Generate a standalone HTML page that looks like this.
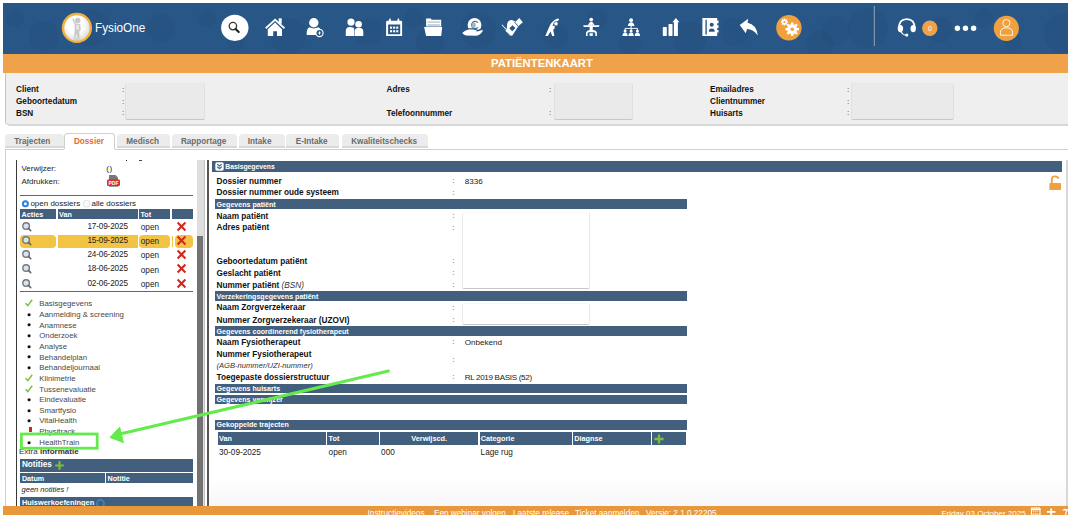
<!DOCTYPE html>
<html><head><meta charset="utf-8">
<style>
*{box-sizing:border-box}
html,body{margin:0;padding:0}
body{width:1070px;height:518px;overflow:hidden;position:relative;background:#fff;font-family:"Liberation Sans",sans-serif;color:#111}
.a{position:absolute;white-space:nowrap}
</style></head><body>
<div class="a" style="left:3px;top:3px;width:1065px;height:50.5px;background:#285787;"></div>
<svg class="a" style="left:0;top:0" width="1070" height="53" viewBox="0 0 1070 53">
<defs>
<radialGradient id="lg" cx="0.45" cy="0.4" r="0.6"><stop offset="0.5" stop-color="#fff"/><stop offset="1" stop-color="#d8d8d8"/></radialGradient>
<clipPath id="hc"><rect x="3" y="3" width="1065" height="50"/></clipPath>
</defs>
<g clip-path="url(#hc)" fill="#000" fill-opacity="0.035">
<circle cx="15" cy="18" r="9"/><circle cx="44" cy="36" r="15"/><circle cx="92" cy="28" r="19"/>
<circle cx="161" cy="28" r="14"/><circle cx="207" cy="18" r="9"/><circle cx="236" cy="42" r="9"/>
<circle cx="288" cy="36" r="18"/><circle cx="368" cy="32" r="14"/><circle cx="414" cy="18" r="10"/>
<circle cx="430" cy="42" r="14"/><circle cx="478" cy="30" r="18"/><circle cx="555" cy="35" r="13"/>
<circle cx="597" cy="19" r="10"/><circle cx="630" cy="44" r="11"/><circle cx="690" cy="38" r="17"/>
<circle cx="735" cy="32" r="14"/><circle cx="820" cy="44" r="14"/><circle cx="836" cy="31" r="15"/>
<circle cx="868" cy="28" r="20"/><circle cx="940" cy="30" r="13"/><circle cx="984" cy="18" r="10"/>
<circle cx="1013" cy="42" r="9"/><circle cx="1063" cy="33" r="20"/>
</g>
<!-- logo -->
<circle cx="76.9" cy="27.9" r="13.9" fill="url(#lg)" stroke="#f0b23c" stroke-width="2.4"/>
<g fill="#c9c9c9">
<circle cx="77.8" cy="20.4" r="2.7"/>
<path d="M74.6 24 Q77.6 22.8 80.3 24.2 L80.8 30.2 L79.3 31.3 L79.6 37.6 L77.6 38.6 L76.7 33.5 L75.8 37.8 L74.1 37.3 L74.7 30.5 Z"/>
<path d="M75 24.4 L73 21.3 L72.4 18.4 L73.8 18.5 L74.7 21.2 L76.3 23.6 Z"/>
</g>
<path d="M76 25 Q77.5 24.2 79 25 L79.3 29.5 L76.3 29.8 Z" fill="#e4e4e4"/>
<ellipse cx="77.2" cy="39" rx="4" ry="0.9" fill="#d0d0d0"/>
<text x="95" y="31.8" font-family="Liberation Sans" font-size="13.2" fill="#fff" transform="translate(95 0) scale(0.89 1) translate(-95 0)">FysioOne</text>
<!-- search -->
<ellipse cx="234.8" cy="27.8" rx="13.7" ry="13.1" fill="#fff"/>
<circle cx="232.9" cy="26.1" r="3.7" fill="none" stroke="#333" stroke-width="1.3"/>
<path d="M235.6 28.9 L238.7 32" stroke="#222" stroke-width="2.1" stroke-linecap="round"/>
<g fill="#fff">
<!-- home -->
<path d="M265.2 27.6 L275.1 18.5 L285 27.6 L283.9 28.9 L275.1 20.9 L266.3 28.9 Z"/>
<rect x="278.7" y="18.3" width="3" height="5.5"/>
<path d="M267.8 29.3 L275.1 22.4 L282 29.3 L282 35.9 L277 35.9 L277 31.2 L273.2 31.2 L273.2 35.9 L267.8 35.9 Z"/>
<!-- user badge -->
<circle cx="313.8" cy="22.8" r="4.7"/>
<path d="M306.7 34.9 Q306.2 29 309.5 27.3 Q313.8 29.5 318.2 27.3 Q320.5 28.5 320.6 30 L320.6 34.9 Z"/>
<circle cx="319.5" cy="33" r="3.6" fill="#285787" stroke="#fff" stroke-width="1.1"/>
<path d="M319.5 30.9 L320.6 33 L319.5 35.1 L318.4 33 Z"/>
<!-- two users -->
<circle cx="351" cy="22.1" r="3.6"/>
<circle cx="358.6" cy="24.2" r="3.3"/>
<path d="M345.8 35.9 L345.8 31 Q345.8 27.1 350 27.1 Q353.6 27.1 354.2 29 L354.2 35.9 Z"/>
<path d="M354.6 35.9 L354.6 31.5 Q354.6 27.8 358.9 27.8 Q363.3 27.8 363.3 31.5 L363.3 35.9 Z"/>
<!-- calendar -->
<path d="M386.1 22 Q386.1 20.7 387.4 20.7 L388.8 20.7 L389.4 18.4 L390.6 18.4 L391 20.7 L397.4 20.7 L397.8 18.4 L399 18.4 L399.4 20.7 L400.8 20.7 Q402.1 20.7 402.1 22 L402.1 35.9 L386.1 35.9 Z M388.1 24.4 L388.1 34.2 L400.2 34.2 L400.2 24.4 Z"/>
<rect x="390" y="26.6" width="2.1" height="2.1"/><rect x="393.1" y="26.6" width="2.1" height="2.1"/><rect x="396.2" y="26.6" width="2.1" height="2.1"/>
<rect x="390" y="30.2" width="2.1" height="2.1"/><rect x="393.1" y="30.2" width="2.1" height="2.1"/><rect x="396.2" y="30.2" width="2.1" height="2.1"/>
<!-- folder -->
<path d="M426.1 26.5 L426.1 18.4 L430.9 18.4 L431.5 19.7 L441.2 19.7 L441.2 26.5 Z"/>
<path d="M427.3 21.2 L440 21.2 L440 23 L427.3 23 Z M427.5 24 L439.8 24 L439.8 26 L427.5 26 Z" fill="#c8d4e0"/>
<path d="M424.1 27.1 L442.2 27.1 L441.2 35.9 L426.1 35.9 Z"/>
<!-- hand coin -->
<circle cx="474.5" cy="25" r="6.9"/>
<path d="M477.9 22.6 A3.6 3.6 0 1 0 477.9 27.4" fill="none" stroke="#3d6a99" stroke-width="1.1"/>
<rect x="471.8" y="23" width="3.8" height="4.6" fill="#9fb5cb"/>
<path d="M462 32.6 Q465 29.6 468.6 28.8 L474 29 L477.9 30.5 L483 29.1" fill="none" stroke="#285787" stroke-width="1.3"/>
<path d="M462.2 33 Q465 30.2 468.6 29.6 L474 29.8 Q476.5 30.3 475.8 31.2 L471 31.6 L477.6 31.6 L482.8 29.8 Q483.2 31.5 480.8 33.4 Q479 35.3 476.5 35.7 L466 35.6 Q463.5 34.9 462.2 33 Z"/>
<!-- syringe hand -->
<path fill-rule="evenodd" d="M507 27.6 Q506.6 21.6 510 20.3 Q512.6 19.4 515.2 21.8 L518.8 25.6 L512.2 35.7 L509.6 35.4 L505.4 30.8 L506.4 29.6 Z M509.3 28.3 L512.5 25.2 L515.4 28.1 L512.2 31.3 Z"/>
<path d="M514.6 22.2 L518.2 26.4" stroke="#285787" stroke-width="0.9"/>
<path d="M515.4 21.8 L519.3 18 L522.8 22.2 L518.6 26 Z"/>
<path d="M501.6 25.1 L502.3 24.5 L506.6 29.2 L505.9 29.8 Z"/>
<path d="M507 32.5 L510.5 35.6" stroke="#285787" stroke-width="0.6"/>
<!-- stretch person -->
<path d="M545.3 35.9 L548.6 28.3 Q550.5 22 556.3 18.9 Q558.6 18 559 19.3 Q559 20.6 557.2 21.2 Q553.2 23.6 552.6 26 L554.8 25.8 L554.6 28.6 L553.2 29.8 L554.4 35.9 L552.2 35.9 L550.6 31.6 L547.8 35.9 Z"/>
<circle cx="556" cy="23.8" r="2.2" fill="#fff" stroke="#285787" stroke-width="0.8"/>
<!-- desk person -->
<circle cx="591.2" cy="19.6" r="1.9"/>
<path d="M587.6 25.6 L590 21.9 L592.4 21.9 L594.8 25.6 L593.2 25.6 L591.2 23.4 L589.2 25.6 Z"/>
<path d="M590.2 22.8 L592.2 22.8 L592.2 25.6 L590.2 25.6 Z"/>
<path d="M583.1 25.2 L599.6 25.2 L598.8 26.9 L583.9 26.9 Z"/>
<path d="M589.6 26.9 L592.8 26.9 L592.8 30 Q596.2 30 596.9 32.5 L596.9 35.9 L595.3 35.9 L595.3 33 Q595 32.2 593.5 32.2 L589 32.2 Q587.6 32.2 587.6 33 L587.6 35.9 L586 35.9 L586 32.5 Q586.8 30 589.6 30 Z"/>
<rect x="589.6" y="33.2" width="3.2" height="2.7"/>
<!-- hierarchy -->
<circle cx="631.1" cy="20.2" r="1.9"/>
<path d="M627.8 25.9 Q628.5 22.3 631.1 22.3 Q633.7 22.3 634.5 25.9 Z"/>
<rect x="630.6" y="25.5" width="1" height="2.8"/>
<rect x="625" y="27.9" width="12.4" height="0.9"/>
<rect x="624.6" y="28.4" width="1" height="1.5"/><rect x="630.6" y="28.4" width="1" height="1.5"/><rect x="636.9" y="28.4" width="1" height="1.5"/>
<circle cx="625.1" cy="31" r="1.5"/><circle cx="631.1" cy="31" r="1.5"/><circle cx="637.4" cy="31" r="1.5"/>
<path d="M622.4 35.9 Q622.8 32.6 625.1 32.6 Q627.4 32.6 627.8 35.9 Z M628.4 35.9 Q628.8 32.6 631.1 32.6 Q633.4 32.6 633.8 35.9 Z M634.7 35.9 Q635.1 32.6 637.4 32.6 Q639.7 32.6 640.1 35.9 Z"/>
<!-- bars -->
<rect x="662.8" y="27.1" width="4" height="8.8" rx="0.6"/>
<rect x="668.5" y="24.1" width="4" height="11.8" rx="0.6"/>
<path d="M673.9 35.9 L673.9 22.3 L672.4 22.3 L675.9 18.1 L679.4 22.3 L677.9 22.3 L677.9 35.9 Z"/>
<!-- contact book -->
<path d="M702.4 18.1 L717.2 18.1 L717.2 20.5 L718.5 20.5 L718.5 23.2 L717.2 23.2 L717.2 25.2 L718.5 25.2 L718.5 27.9 L717.2 27.9 L717.2 29.9 L718.5 29.9 L718.5 32.6 L717.2 32.6 L717.2 35.9 L702.4 35.9 Z M705.4 19.7 L705.4 34.5 L706.8 34.5 L706.8 19.7 Z"/>
<circle cx="711.7" cy="24.7" r="2" fill="#285787"/>
<path d="M708.9 31.8 L708.9 30.6 Q709.2 28.4 711.7 28.4 Q714.3 28.4 714.6 30.6 L714.6 31.8 Z" fill="#285787"/>
<!-- reply -->
<path d="M739.7 25.1 L748.2 18.7 L747.6 22.8 Q756.5 24.5 757.8 35.6 Q753.5 29.5 747 29.1 L745.8 33.2 Z"/>
</g>
<!-- gears -->
<circle cx="788.9" cy="27.7" r="12.7" fill="#f0a03c"/>
<g fill="#fff">
<g transform="translate(792.2 29.2)">
<circle r="5"/>
<rect x="-1.2" y="-6.8" width="2.4" height="13.6"/><rect x="-1.2" y="-6.8" width="2.4" height="13.6" transform="rotate(45)"/><rect x="-1.2" y="-6.8" width="2.4" height="13.6" transform="rotate(90)"/><rect x="-1.2" y="-6.8" width="2.4" height="13.6" transform="rotate(135)"/>
<circle r="1.8" fill="#f0a03c"/>
</g>
<g transform="translate(784.4 22)">
<circle r="2.6"/>
<rect x="-0.7" y="-3.5" width="1.4" height="7"/><rect x="-0.7" y="-3.5" width="1.4" height="7" transform="rotate(45)"/><rect x="-0.7" y="-3.5" width="1.4" height="7" transform="rotate(90)"/><rect x="-0.7" y="-3.5" width="1.4" height="7" transform="rotate(135)"/>
<circle r="1.1" fill="#f0a03c"/>
</g>
</g>
<!-- separator -->
<rect x="873.8" y="6" width="1" height="40" fill="#8fa5bb"/>
<!-- headset -->
<path d="M898.9 28.5 Q898.9 19.2 906.8 19.2 Q914.7 19.2 914.7 28.5" fill="none" stroke="#fff" stroke-width="1.8"/>
<ellipse cx="900.4" cy="28.6" rx="2.7" ry="3.7" fill="#fff"/>
<ellipse cx="913.2" cy="28.6" rx="2.7" ry="3.7" fill="#fff"/>
<path d="M900.8 31.5 Q902.5 34.8 906 35.2" fill="none" stroke="#fff" stroke-width="1.1"/>
<circle cx="906.8" cy="35.1" r="1.6" fill="#fff"/>
<!-- badge -->
<circle cx="929.8" cy="28.2" r="7.7" fill="#f0a24a"/>
<text x="929.8" y="31.3" font-family="Liberation Sans" font-size="8" fill="#fff" text-anchor="middle" transform="translate(929.8 0) scale(0.85 1) translate(-929.8 0)">0</text>
<!-- dots -->
<circle cx="957.4" cy="28.2" r="2.7" fill="#fff"/><circle cx="965.5" cy="28.2" r="2.7" fill="#fff"/><circle cx="973.6" cy="28.2" r="2.7" fill="#fff"/>
<!-- user -->
<circle cx="1006.4" cy="28.3" r="12.6" fill="#f0a03c"/>
<circle cx="1006.4" cy="23.1" r="3.6" fill="none" stroke="#fff" stroke-width="0.9"/>
<path d="M1000.5 35.2 L1000.5 32.5 Q1000.5 27.8 1006.4 27.8 Q1012.5 27.8 1012.5 32.5 L1012.5 35.2 Z" fill="none" stroke="#fff" stroke-width="0.9"/>
</svg>
<div class="a" style="left:3px;top:53.5px;width:1065px;height:19.3px;background:#f0a24a;"></div>
<div class="a" style="left:491px;top:57.83px;font-size:11.3px;line-height:11.3px;font-weight:bold;color:#fff;font-style:normal;">PATIËNTENKAART</div>
<div class="a" style="left:5px;top:73px;width:1063px;height:53px;background:#efefef;border-left:1px solid #c4c4c4;border-bottom:2px solid #d8d8d8;border-bottom-left-radius:5px"></div>
<div class="a" style="left:16px;top:86.46px;font-size:8.2px;line-height:8.2px;font-weight:bold;color:#111;font-style:normal;">Client</div>
<div class="a" style="left:122px;top:85.63px;font-size:8px;line-height:8px;font-weight:normal;color:#333;font-style:normal;">:</div>
<div class="a" style="left:16px;top:98.36px;font-size:8.2px;line-height:8.2px;font-weight:bold;color:#111;font-style:normal;">Geboortedatum</div>
<div class="a" style="left:122px;top:97.53px;font-size:8px;line-height:8px;font-weight:normal;color:#333;font-style:normal;">:</div>
<div class="a" style="left:16px;top:110.26px;font-size:8.2px;line-height:8.2px;font-weight:bold;color:#111;font-style:normal;">BSN</div>
<div class="a" style="left:122px;top:109.43px;font-size:8px;line-height:8px;font-weight:normal;color:#333;font-style:normal;">:</div>
<div class="a" style="left:125px;top:83px;width:80px;height:37px;background:#eaeaea;border:1px dotted #d6d6d6;border-top-color:#e8e8e8;border-bottom:1px solid #c8c8c8;border-radius:2px"></div>
<div class="a" style="left:386.5px;top:86.46px;font-size:8.2px;line-height:8.2px;font-weight:bold;color:#111;font-style:normal;">Adres</div>
<div class="a" style="left:386.5px;top:110.26px;font-size:8.2px;line-height:8.2px;font-weight:bold;color:#111;font-style:normal;">Telefoonnummer</div>
<div class="a" style="left:549px;top:85.63px;font-size:8px;line-height:8px;font-weight:normal;color:#333;font-style:normal;">:</div>
<div class="a" style="left:549px;top:109.43px;font-size:8px;line-height:8px;font-weight:normal;color:#333;font-style:normal;">:</div>
<div class="a" style="left:554px;top:83px;width:79px;height:37px;background:#eaeaea;border:1px dotted #d6d6d6;border-top-color:#e8e8e8;border-bottom:1px solid #c8c8c8;border-radius:2px"></div>
<div class="a" style="left:710px;top:86.46px;font-size:8.2px;line-height:8.2px;font-weight:bold;color:#111;font-style:normal;">Emailadres</div>
<div class="a" style="left:847px;top:85.63px;font-size:8px;line-height:8px;font-weight:normal;color:#333;font-style:normal;">:</div>
<div class="a" style="left:710px;top:98.36px;font-size:8.2px;line-height:8.2px;font-weight:bold;color:#111;font-style:normal;">Clientnummer</div>
<div class="a" style="left:847px;top:97.53px;font-size:8px;line-height:8px;font-weight:normal;color:#333;font-style:normal;">:</div>
<div class="a" style="left:710px;top:110.26px;font-size:8.2px;line-height:8.2px;font-weight:bold;color:#111;font-style:normal;">Huisarts</div>
<div class="a" style="left:847px;top:109.43px;font-size:8px;line-height:8px;font-weight:normal;color:#333;font-style:normal;">:</div>
<div class="a" style="left:850.5px;top:83px;width:103px;height:37px;background:#eaeaea;border:1px dotted #d6d6d6;border-top-color:#e8e8e8;border-bottom:1px solid #c8c8c8;border-radius:2px"></div>
<div class="a" style="left:5px;top:133.5px;width:58.8px;height:14px;background:#ececec;border-radius:4px 4px 0 0;border-bottom:2px solid #d9d9d9"></div>
<div class="a" style="left:14.3px;top:137.66px;font-size:8.2px;line-height:8.2px;font-weight:bold;color:#6b6b6b;font-style:normal;">Trajecten</div>
<div class="a" style="left:64.4px;top:133px;width:51.0px;height:17px;background:#fff;border:1px solid #cfcfcf;border-bottom:none;border-radius:4px 4px 0 0"></div>
<div class="a" style="left:73.9px;top:137.66px;font-size:8.2px;line-height:8.2px;font-weight:bold;color:#e8692f;font-style:normal;">Dossier</div>
<div class="a" style="left:117px;top:133.5px;width:53.0px;height:14px;background:#ececec;border-radius:4px 4px 0 0;border-bottom:2px solid #d9d9d9"></div>
<div class="a" style="left:126.3px;top:137.66px;font-size:8.2px;line-height:8.2px;font-weight:bold;color:#6b6b6b;font-style:normal;">Medisch</div>
<div class="a" style="left:171.6px;top:133.5px;width:65.4px;height:14px;background:#ececec;border-radius:4px 4px 0 0;border-bottom:2px solid #d9d9d9"></div>
<div class="a" style="left:180.9px;top:137.66px;font-size:8.2px;line-height:8.2px;font-weight:bold;color:#6b6b6b;font-style:normal;">Rapportage</div>
<div class="a" style="left:238.5px;top:133.5px;width:46.5px;height:14px;background:#ececec;border-radius:4px 4px 0 0;border-bottom:2px solid #d9d9d9"></div>
<div class="a" style="left:247.8px;top:137.66px;font-size:8.2px;line-height:8.2px;font-weight:bold;color:#6b6b6b;font-style:normal;">Intake</div>
<div class="a" style="left:286.4px;top:133.5px;width:53.0px;height:14px;background:#ececec;border-radius:4px 4px 0 0;border-bottom:2px solid #d9d9d9"></div>
<div class="a" style="left:295.7px;top:137.66px;font-size:8.2px;line-height:8.2px;font-weight:bold;color:#6b6b6b;font-style:normal;">E-Intake</div>
<div class="a" style="left:341.9px;top:133.5px;width:85.8px;height:14px;background:#ececec;border-radius:4px 4px 0 0;border-bottom:2px solid #d9d9d9"></div>
<div class="a" style="left:351.2px;top:137.66px;font-size:8.2px;line-height:8.2px;font-weight:bold;color:#6b6b6b;font-style:normal;">Kwaliteitschecks</div>
<div class="a" style="left:5px;top:149px;width:1063px;height:1px;background:#cfcfcf;"></div>
<div class="a" style="left:64.4px;top:149px;width:51px;height:1px;background:#fff;"></div>
<div class="a" style="left:5px;top:149px;width:1px;height:358px;background:#cfcfcf;"></div>
<div class="a" style="left:1066px;top:160px;width:1.5px;height:347px;background:#d8d8d8;"></div>
<div class="a" style="left:16px;top:160px;width:1.3px;height:347px;background:#3a3a3a;"></div>
<div class="a" style="left:196.8px;top:160px;width:7.3px;height:347px;background:#dedede;"></div>
<div class="a" style="left:196.8px;top:236.2px;width:6.2px;height:271px;background:#727272;"></div>
<div class="a" style="left:204px;top:160px;width:1px;height:347px;background:#c4c4c4;"></div>
<div class="a" style="left:206.9px;top:160px;width:1.7px;height:347px;background:#555;"></div>
<div class="a" style="left:21.4px;top:165.03px;font-size:8px;line-height:8px;font-weight:normal;color:#222;font-style:normal;">Verwijzer:</div>
<div class="a" style="left:106.2px;top:165.03px;font-size:8px;line-height:8px;font-weight:normal;color:#222;font-style:normal;letter-spacing:0.6px">()</div>
<div class="a" style="left:21.4px;top:177.63px;font-size:8px;line-height:8px;font-weight:normal;color:#222;font-style:normal;">Afdrukken:</div>
<div class="a" style="left:126px;top:160px;width:1.2px;height:1.2px;background:#222;"></div>
<div class="a" style="left:138.5px;top:160px;width:3px;height:1px;background:#444;"></div>
<svg class="a" style="left:106px;top:174px" width="15" height="14" viewBox="0 0 15 14">
<path d="M3 1 L9.5 1 L12 3.5 L12 7 L3 7 Z" fill="#777"/>
<rect x="1" y="5.5" width="13" height="6.5" rx="1.2" fill="#d3312a"/>
<rect x="3" y="12" width="9" height="1" fill="#999"/>
<text x="7.5" y="10.6" font-family="Liberation Sans" font-size="5" font-weight="bold" fill="#fff" text-anchor="middle">PDF</text>
</svg>
<div class="a" style="left:20px;top:195px;width:173px;height:1.2px;background:#4b6d8c;"></div>
<svg class="a" style="left:20px;top:199.3px" width="75" height="10" viewBox="0 0 75 10">
<circle cx="5.4" cy="4.7" r="3.5" fill="#2f7fe2"/><circle cx="5.4" cy="4.7" r="1.5" fill="#fff"/>
<circle cx="66.6" cy="4.7" r="3.4" fill="#fafafa" stroke="#d8d8d8" stroke-width="0.7"/>
</svg>
<div class="a" style="left:30.4px;top:199.63px;font-size:8px;line-height:8px;font-weight:normal;color:#222;font-style:normal;">open dossiers</div>
<div class="a" style="left:91.6px;top:199.63px;font-size:8px;line-height:8px;font-weight:normal;color:#222;font-style:normal;">alle dossiers</div>
<div class="a" style="left:20.2px;top:209px;width:36.0px;height:9.8px;background:#42607d;"></div>
<div class="a" style="left:21.599999999999998px;top:210.71px;font-size:7.2px;line-height:7.2px;font-weight:bold;color:#fff;font-style:normal;">Acties</div>
<div class="a" style="left:57.7px;top:209px;width:79.9px;height:9.8px;background:#42607d;"></div>
<div class="a" style="left:59.1px;top:210.71px;font-size:7.2px;line-height:7.2px;font-weight:bold;color:#fff;font-style:normal;">Van</div>
<div class="a" style="left:139px;top:209px;width:30.9px;height:9.8px;background:#42607d;"></div>
<div class="a" style="left:140.4px;top:210.71px;font-size:7.2px;line-height:7.2px;font-weight:bold;color:#fff;font-style:normal;">Tot</div>
<div class="a" style="left:171.6px;top:209px;width:21.4px;height:9.8px;background:#42607d;"></div>
<svg class="a" style="left:20px;top:219.50px" width="14" height="14" viewBox="0 0 14 14">
<circle cx="6.1" cy="6" r="3.3" fill="#d4e4f4" stroke="#787878" stroke-width="1.4"/>
<path d="M8.4 8.4 L10.7 10.6" stroke="#666" stroke-width="1.6" stroke-linecap="round"/></svg>
<div class="a" style="left:58px;width:69.8px;top:222.56px;font-size:8.2px;line-height:8.2px;color:#222;text-align:right;letter-spacing:-0.15px">17-09-2025</div>
<div class="a" style="left:140.8px;top:223.76px;font-size:8.2px;line-height:8.2px;font-weight:normal;color:#222;font-style:normal;">open</div>
<svg class="a" style="left:176px;top:220.50px" width="11" height="11" viewBox="0 0 11 11">
<path d="M1.6 1.6 L9.4 9.4 M9.4 1.6 L1.6 9.4" stroke="#cf2a1e" stroke-width="2.1"/></svg>
<div class="a" style="left:20.2px;top:234.5px;width:36px;height:13px;background:#f3c443;border-radius:4px"></div>
<div class="a" style="left:58px;top:234.5px;width:79.9px;height:13px;background:#f3c443;"></div>
<div class="a" style="left:139px;top:234.5px;width:30.8px;height:13px;background:#f3c443;border-radius:4px"></div>
<div class="a" style="left:171.7px;top:235.5px;width:1.4px;height:11px;background:#f3c443;"></div>
<div class="a" style="left:174.8px;top:234.5px;width:18.3px;height:13px;background:#f3c443;border-radius:4px"></div>
<svg class="a" style="left:20px;top:233.80px" width="14" height="14" viewBox="0 0 14 14">
<circle cx="6.1" cy="6" r="3.3" fill="#d4e4f4" stroke="#787878" stroke-width="1.4"/>
<path d="M8.4 8.4 L10.7 10.6" stroke="#666" stroke-width="1.6" stroke-linecap="round"/></svg>
<div class="a" style="left:58px;width:69.8px;top:236.86px;font-size:8.2px;line-height:8.2px;color:#222;text-align:right;letter-spacing:-0.15px">15-09-2025</div>
<div class="a" style="left:140.8px;top:238.06px;font-size:8.2px;line-height:8.2px;font-weight:normal;color:#222;font-style:normal;">open</div>
<svg class="a" style="left:176px;top:234.80px" width="11" height="11" viewBox="0 0 11 11">
<path d="M1.6 1.6 L9.4 9.4 M9.4 1.6 L1.6 9.4" stroke="#cf2a1e" stroke-width="2.1"/></svg>
<svg class="a" style="left:20px;top:248.10px" width="14" height="14" viewBox="0 0 14 14">
<circle cx="6.1" cy="6" r="3.3" fill="#d4e4f4" stroke="#787878" stroke-width="1.4"/>
<path d="M8.4 8.4 L10.7 10.6" stroke="#666" stroke-width="1.6" stroke-linecap="round"/></svg>
<div class="a" style="left:58px;width:69.8px;top:251.16px;font-size:8.2px;line-height:8.2px;color:#222;text-align:right;letter-spacing:-0.15px">24-06-2025</div>
<div class="a" style="left:140.8px;top:252.36px;font-size:8.2px;line-height:8.2px;font-weight:normal;color:#222;font-style:normal;">open</div>
<svg class="a" style="left:176px;top:249.10px" width="11" height="11" viewBox="0 0 11 11">
<path d="M1.6 1.6 L9.4 9.4 M9.4 1.6 L1.6 9.4" stroke="#cf2a1e" stroke-width="2.1"/></svg>
<svg class="a" style="left:20px;top:262.40px" width="14" height="14" viewBox="0 0 14 14">
<circle cx="6.1" cy="6" r="3.3" fill="#d4e4f4" stroke="#787878" stroke-width="1.4"/>
<path d="M8.4 8.4 L10.7 10.6" stroke="#666" stroke-width="1.6" stroke-linecap="round"/></svg>
<div class="a" style="left:58px;width:69.8px;top:265.46px;font-size:8.2px;line-height:8.2px;color:#222;text-align:right;letter-spacing:-0.15px">18-06-2025</div>
<div class="a" style="left:140.8px;top:266.66px;font-size:8.2px;line-height:8.2px;font-weight:normal;color:#222;font-style:normal;">open</div>
<svg class="a" style="left:176px;top:263.40px" width="11" height="11" viewBox="0 0 11 11">
<path d="M1.6 1.6 L9.4 9.4 M9.4 1.6 L1.6 9.4" stroke="#cf2a1e" stroke-width="2.1"/></svg>
<svg class="a" style="left:20px;top:276.70px" width="14" height="14" viewBox="0 0 14 14">
<circle cx="6.1" cy="6" r="3.3" fill="#d4e4f4" stroke="#787878" stroke-width="1.4"/>
<path d="M8.4 8.4 L10.7 10.6" stroke="#666" stroke-width="1.6" stroke-linecap="round"/></svg>
<div class="a" style="left:58px;width:69.8px;top:279.76px;font-size:8.2px;line-height:8.2px;color:#222;text-align:right;letter-spacing:-0.15px">02-06-2025</div>
<div class="a" style="left:140.8px;top:280.96px;font-size:8.2px;line-height:8.2px;font-weight:normal;color:#222;font-style:normal;">open</div>
<svg class="a" style="left:176px;top:277.70px" width="11" height="11" viewBox="0 0 11 11">
<path d="M1.6 1.6 L9.4 9.4 M9.4 1.6 L1.6 9.4" stroke="#cf2a1e" stroke-width="2.1"/></svg>
<div class="a" style="left:20px;top:291px;width:173px;height:1.2px;background:#4b6d8c;"></div>
<div class="a" style="left:39.3px;top:300.30px;font-size:7.8px;line-height:7.8px;font-weight:normal;color:#484848;font-style:normal;">Basisgegevens</div>
<svg class="a" style="left:25px;top:299.40px" width="8" height="8" viewBox="0 0 8 8">
<path d="M0.6 4.2 L2.8 6.6 L7.2 0.8" fill="none" stroke="#79bf45" stroke-width="1.5"/></svg>
<div class="a" style="left:39.3px;top:310.95px;font-size:7.8px;line-height:7.8px;font-weight:normal;color:#484848;font-style:normal;">Aanmelding &amp; screening</div>
<svg class="a" style="left:26px;top:311.75px" width="6" height="6" viewBox="0 0 6 6"><circle cx="3.1" cy="2.7" r="1.55" fill="#111"/></svg>
<div class="a" style="left:39.3px;top:321.60px;font-size:7.8px;line-height:7.8px;font-weight:normal;color:#484848;font-style:normal;">Anamnese</div>
<svg class="a" style="left:26px;top:322.40px" width="6" height="6" viewBox="0 0 6 6"><circle cx="3.1" cy="2.7" r="1.55" fill="#111"/></svg>
<div class="a" style="left:39.3px;top:332.25px;font-size:7.8px;line-height:7.8px;font-weight:normal;color:#484848;font-style:normal;">Onderzoek</div>
<svg class="a" style="left:26px;top:333.05px" width="6" height="6" viewBox="0 0 6 6"><circle cx="3.1" cy="2.7" r="1.55" fill="#111"/></svg>
<div class="a" style="left:39.3px;top:342.90px;font-size:7.8px;line-height:7.8px;font-weight:normal;color:#484848;font-style:normal;">Analyse</div>
<svg class="a" style="left:26px;top:343.70px" width="6" height="6" viewBox="0 0 6 6"><circle cx="3.1" cy="2.7" r="1.55" fill="#111"/></svg>
<div class="a" style="left:39.3px;top:353.55px;font-size:7.8px;line-height:7.8px;font-weight:normal;color:#484848;font-style:normal;">Behandelplan</div>
<svg class="a" style="left:26px;top:354.35px" width="6" height="6" viewBox="0 0 6 6"><circle cx="3.1" cy="2.7" r="1.55" fill="#111"/></svg>
<div class="a" style="left:39.3px;top:364.20px;font-size:7.8px;line-height:7.8px;font-weight:normal;color:#484848;font-style:normal;">Behandeljournaal</div>
<svg class="a" style="left:26px;top:365.00px" width="6" height="6" viewBox="0 0 6 6"><circle cx="3.1" cy="2.7" r="1.55" fill="#111"/></svg>
<div class="a" style="left:39.3px;top:374.85px;font-size:7.8px;line-height:7.8px;font-weight:normal;color:#484848;font-style:normal;">Klinimetrie</div>
<svg class="a" style="left:25px;top:373.95px" width="8" height="8" viewBox="0 0 8 8">
<path d="M0.6 4.2 L2.8 6.6 L7.2 0.8" fill="none" stroke="#79bf45" stroke-width="1.5"/></svg>
<div class="a" style="left:39.3px;top:385.50px;font-size:7.8px;line-height:7.8px;font-weight:normal;color:#484848;font-style:normal;">Tussenevaluatie</div>
<svg class="a" style="left:25px;top:384.60px" width="8" height="8" viewBox="0 0 8 8">
<path d="M0.6 4.2 L2.8 6.6 L7.2 0.8" fill="none" stroke="#79bf45" stroke-width="1.5"/></svg>
<div class="a" style="left:39.3px;top:396.15px;font-size:7.8px;line-height:7.8px;font-weight:normal;color:#484848;font-style:normal;">Eindevaluatie</div>
<svg class="a" style="left:26px;top:396.95px" width="6" height="6" viewBox="0 0 6 6"><circle cx="3.1" cy="2.7" r="1.55" fill="#111"/></svg>
<div class="a" style="left:39.3px;top:406.80px;font-size:7.8px;line-height:7.8px;font-weight:normal;color:#484848;font-style:normal;">Smartfysio</div>
<svg class="a" style="left:26px;top:407.60px" width="6" height="6" viewBox="0 0 6 6"><circle cx="3.1" cy="2.7" r="1.55" fill="#111"/></svg>
<div class="a" style="left:39.3px;top:417.45px;font-size:7.8px;line-height:7.8px;font-weight:normal;color:#484848;font-style:normal;">VitalHealth</div>
<svg class="a" style="left:26px;top:418.25px" width="6" height="6" viewBox="0 0 6 6"><circle cx="3.1" cy="2.7" r="1.55" fill="#111"/></svg>
<div class="a" style="left:39.3px;top:428.10px;font-size:7.8px;line-height:7.8px;font-weight:normal;color:#484848;font-style:normal;">Physitrack</div>
<div class="a" style="left:29.4px;top:426.59999999999997px;width:2.4px;height:5.8px;background:#d0281e;"></div>
<div class="a" style="left:39.3px;top:438.75px;font-size:7.8px;line-height:7.8px;font-weight:normal;color:#484848;font-style:normal;">HealthTrain</div>
<svg class="a" style="left:26px;top:439.55px" width="6" height="6" viewBox="0 0 6 6"><circle cx="3.1" cy="2.7" r="1.55" fill="#111"/></svg>
<div class="a" style="left:19px;top:448.43px;font-size:8px;line-height:8px;font-weight:normal;color:#333;font-style:normal;">Extra <b>informatie</b></div>
<div class="a" style="left:20.1px;top:459px;width:173px;height:12.5px;background:#42607d;"></div>
<div class="a" style="left:21.9px;top:461.26px;font-size:8.2px;line-height:8.2px;font-weight:bold;color:#fff;font-style:normal;">Notities</div>
<svg class="a" style="left:55px;top:460.5px" width="9" height="9" viewBox="0 0 9 9">
<path d="M4.5 0.3 L4.5 8.7 M0.2 4.5 L8.8 4.5" stroke="#7bbd42" stroke-width="2.2"/></svg>
<div class="a" style="left:20.1px;top:473.3px;width:84.6px;height:9.5px;background:#42607d;"></div>
<div class="a" style="left:106.1px;top:473.3px;width:86.9px;height:9.5px;background:#42607d;"></div>
<div class="a" style="left:21.9px;top:474.61px;font-size:7.2px;line-height:7.2px;font-weight:bold;color:#fff;font-style:normal;">Datum</div>
<div class="a" style="left:107.5px;top:474.61px;font-size:7.2px;line-height:7.2px;font-weight:bold;color:#fff;font-style:normal;">Notitie</div>
<div class="a" style="left:21.6px;top:486.05px;font-size:7.5px;line-height:7.5px;font-weight:normal;color:#222;font-style:italic;">geen notities !</div>
<div class="a" style="left:20.1px;top:497.3px;width:173px;height:10px;background:#42607d;"></div>
<div class="a" style="left:21.9px;top:498.64px;font-size:7.4px;line-height:7.4px;font-weight:bold;color:#fff;font-style:normal;">Huiswerkoefeningen</div>
<svg class="a" style="left:95px;top:498px" width="11" height="9" viewBox="0 0 11 9">
<circle cx="5.5" cy="5.5" r="3.6" fill="none" stroke="#3a86c8" stroke-width="1.6"/></svg>
<div class="a" style="left:212.2px;top:161px;width:849.8px;height:10.8px;background:#42607d;"></div>
<svg class="a" style="left:214.5px;top:162.4px" width="9" height="9" viewBox="0 0 9 9">
<rect x="0.3" y="0.3" width="8.4" height="8.4" rx="1.6" fill="#fff"/>
<path d="M2.3 2.2 L4.5 4 L6.7 2.2 M2.3 4.8 L4.5 6.6 L6.7 4.8" fill="none" stroke="#3b6fa6" stroke-width="1.3"/></svg>
<div class="a" style="left:225.3px;top:163.84px;font-size:6.8px;line-height:6.8px;font-weight:bold;color:#fff;font-style:normal;">Basisgegevens</div>
<svg class="a" style="left:1049px;top:174.5px" width="13" height="16" viewBox="0 0 13 16">
<path d="M2.8 8 L2.8 4.6 Q2.8 1.3 6 1.3 Q8.8 1.3 9.6 3.6" fill="none" stroke="#f0a03c" stroke-width="1.8"/>
<rect x="0.4" y="7.9" width="11.6" height="7.2" rx="0.8" fill="#f0a03c"/></svg>
<div class="a" style="left:216.5px;top:177.72px;font-size:8.25px;line-height:8.25px;font-weight:bold;color:#111;font-style:normal;">Dossier nummer</div>
<div class="a" style="left:452.2px;top:176.93px;font-size:8px;line-height:8px;font-weight:normal;color:#444;font-style:normal;">:</div>
<div class="a" style="left:464.7px;top:177.84px;font-size:8.1px;line-height:8.1px;font-weight:normal;color:#222;font-style:normal;">8336</div>
<div class="a" style="left:216.5px;top:189.32px;font-size:8.25px;line-height:8.25px;font-weight:bold;color:#111;font-style:normal;">Dossier nummer oude systeem</div>
<div class="a" style="left:452.2px;top:188.53px;font-size:8px;line-height:8px;font-weight:normal;color:#444;font-style:normal;">:</div>
<div class="a" style="left:214.9px;top:199.3px;width:472.3px;height:9.5px;background:#42607d;"></div>
<div class="a" style="left:216.6px;top:201.59px;font-size:7.1px;line-height:7.1px;font-weight:bold;color:#fff;font-style:normal;">Gegevens patiënt</div>
<div class="a" style="left:216.5px;top:212.92px;font-size:8.25px;line-height:8.25px;font-weight:bold;color:#111;font-style:normal;">Naam patiënt</div>
<div class="a" style="left:452.2px;top:212.13px;font-size:8px;line-height:8px;font-weight:normal;color:#444;font-style:normal;">:</div>
<div class="a" style="left:216.5px;top:224.32px;font-size:8.25px;line-height:8.25px;font-weight:bold;color:#111;font-style:normal;">Adres patiënt</div>
<div class="a" style="left:452.2px;top:223.53px;font-size:8px;line-height:8px;font-weight:normal;color:#444;font-style:normal;">:</div>
<div class="a" style="left:216.5px;top:257.82px;font-size:8.25px;line-height:8.25px;font-weight:bold;color:#111;font-style:normal;">Geboortedatum patiënt</div>
<div class="a" style="left:452.2px;top:257.03px;font-size:8px;line-height:8px;font-weight:normal;color:#444;font-style:normal;">:</div>
<div class="a" style="left:216.5px;top:269.52px;font-size:8.25px;line-height:8.25px;font-weight:bold;color:#111;font-style:normal;">Geslacht patiënt</div>
<div class="a" style="left:452.2px;top:268.73px;font-size:8px;line-height:8px;font-weight:normal;color:#444;font-style:normal;">:</div>
<div class="a" style="left:216.5px;top:281.72px;font-size:8.25px;line-height:8.25px;font-weight:bold;color:#111;font-style:normal;">Nummer patiënt <i style="font-weight:normal;color:#333">(BSN)</i></div>
<div class="a" style="left:452.2px;top:280.93px;font-size:8px;line-height:8px;font-weight:normal;color:#444;font-style:normal;">:</div>
<div class="a" style="left:214.9px;top:291.3px;width:472.3px;height:9.7px;background:#42607d;"></div>
<div class="a" style="left:216.6px;top:293.79px;font-size:7.1px;line-height:7.1px;font-weight:bold;color:#fff;font-style:normal;">Verzekeringsgegevens patiënt</div>
<div class="a" style="left:216.5px;top:304.32px;font-size:8.25px;line-height:8.25px;font-weight:bold;color:#111;font-style:normal;">Naam Zorgverzekeraar</div>
<div class="a" style="left:452.2px;top:303.53px;font-size:8px;line-height:8px;font-weight:normal;color:#444;font-style:normal;">:</div>
<div class="a" style="left:216.5px;top:316.62px;font-size:8.25px;line-height:8.25px;font-weight:bold;color:#111;font-style:normal;">Nummer Zorgverzekeraar (UZOVI)</div>
<div class="a" style="left:452.2px;top:315.83px;font-size:8px;line-height:8px;font-weight:normal;color:#444;font-style:normal;">:</div>
<div class="a" style="left:214.9px;top:326.2px;width:472.3px;height:9.6px;background:#42607d;"></div>
<div class="a" style="left:216.6px;top:328.59px;font-size:7.1px;line-height:7.1px;font-weight:bold;color:#fff;font-style:normal;">Gegevens coordinerend fysiotherapeut</div>
<div class="a" style="left:216.5px;top:339.02px;font-size:8.25px;line-height:8.25px;font-weight:bold;color:#111;font-style:normal;">Naam Fysiotherapeut</div>
<div class="a" style="left:452.2px;top:338.23px;font-size:8px;line-height:8px;font-weight:normal;color:#444;font-style:normal;">:</div>
<div class="a" style="left:464.7px;top:339.14px;font-size:8.1px;line-height:8.1px;font-weight:normal;color:#222;font-style:normal;">Onbekend</div>
<div class="a" style="left:216.5px;top:351.42px;font-size:8.25px;line-height:8.25px;font-weight:bold;color:#111;font-style:normal;">Nummer Fysiotherapeut</div>
<div class="a" style="left:452.2px;top:356.23px;font-size:8px;line-height:8px;font-weight:normal;color:#444;font-style:normal;">:</div>
<div class="a" style="left:216.5px;top:361.77px;font-size:7.6px;line-height:7.6px;font-weight:normal;color:#333;font-style:italic;">(AGB-nummer/UZI-nummer)</div>
<div class="a" style="left:216.5px;top:373.82px;font-size:8.25px;line-height:8.25px;font-weight:bold;color:#111;font-style:normal;">Toegepaste dossierstructuur</div>
<div class="a" style="left:452.2px;top:373.03px;font-size:8px;line-height:8px;font-weight:normal;color:#444;font-style:normal;">:</div>
<div class="a" style="left:464.7px;top:373.94px;font-size:8.1px;line-height:8.1px;font-weight:normal;color:#222;font-style:normal;letter-spacing:-0.33px">RL 2019 BASIS (52)</div>
<div class="a" style="left:214.9px;top:383.6px;width:472.3px;height:9.3px;background:#42607d;"></div>
<div class="a" style="left:216.6px;top:385.69px;font-size:7.1px;line-height:7.1px;font-weight:bold;color:#fff;font-style:normal;">Gegevens huisarts</div>
<div class="a" style="left:214.9px;top:394.9px;width:472.3px;height:9.3px;background:#42607d;"></div>
<div class="a" style="left:216.6px;top:396.99px;font-size:7.1px;line-height:7.1px;font-weight:bold;color:#fff;font-style:normal;">Gegevens verwijzer</div>
<div class="a" style="left:462.3px;top:212px;width:128.2px;height:76.6px;border:1px dotted #d4d4d4;border-top-color:#f0f0f0;border-bottom:1px solid #c6c6c6;border-radius:2px"></div>
<div class="a" style="left:462.3px;top:302.5px;width:128.2px;height:22.5px;border:1px dotted #d4d4d4;border-top-color:#f0f0f0;border-bottom:1px solid #c6c6c6;border-radius:2px"></div>
<div class="a" style="left:214.9px;top:420px;width:472.3px;height:9.6px;background:#42607d;"></div>
<div class="a" style="left:216.6px;top:422.39px;font-size:7.1px;line-height:7.1px;font-weight:bold;color:#fff;font-style:normal;">Gekoppelde trajecten</div>
<div class="a" style="left:217.9px;top:432px;width:108.2px;height:13px;background:#42607d;"></div>
<div class="a" style="left:219.1px;top:434.82px;font-size:7.3px;line-height:7.3px;font-weight:bold;color:#fff;font-style:normal;">Van</div>
<div class="a" style="left:327.4px;top:432px;width:51.2px;height:13px;background:#42607d;"></div>
<div class="a" style="left:328.59999999999997px;top:434.82px;font-size:7.3px;line-height:7.3px;font-weight:bold;color:#fff;font-style:normal;">Tot</div>
<div class="a" style="left:380px;top:432px;width:98.3px;height:13px;background:#42607d;"></div>
<div class="a" style="left:380px;width:98.3px;top:434.82px;font-size:7.3px;line-height:7.3px;font-weight:bold;color:#fff;text-align:center">Verwijscd.</div>
<div class="a" style="left:479.6px;top:432px;width:92.1px;height:13px;background:#42607d;"></div>
<div class="a" style="left:480.8px;top:434.82px;font-size:7.3px;line-height:7.3px;font-weight:bold;color:#fff;font-style:normal;">Categorie</div>
<div class="a" style="left:573px;top:432px;width:78.2px;height:13px;background:#42607d;"></div>
<div class="a" style="left:574.2px;top:434.82px;font-size:7.3px;line-height:7.3px;font-weight:bold;color:#fff;font-style:normal;">Diagnse</div>
<div class="a" style="left:652.4px;top:432px;width:33.3px;height:13px;background:#42607d;"></div>
<svg class="a" style="left:654px;top:433.5px" width="10" height="10" viewBox="0 0 10 10">
<path d="M5 0.4 L5 9.6 M0.4 5 L9.6 5" stroke="#7bbd42" stroke-width="2.3"/></svg>
<div class="a" style="left:219px;top:449.06px;font-size:8.2px;line-height:8.2px;font-weight:normal;color:#222;font-style:normal;">30-09-2025</div>
<div class="a" style="left:328.6px;top:449.06px;font-size:8.2px;line-height:8.2px;font-weight:normal;color:#222;font-style:normal;">open</div>
<div class="a" style="left:381.1px;top:449.06px;font-size:8.2px;line-height:8.2px;font-weight:normal;color:#222;font-style:normal;">000</div>
<div class="a" style="left:480.6px;top:449.06px;font-size:8.2px;line-height:8.2px;font-weight:normal;color:#222;font-style:normal;">Lage rug</div>
<div class="a" style="left:208.5px;top:478px;width:857.5px;height:28.5px;background:linear-gradient(rgba(243,243,247,0),rgba(243,243,247,0.7))"></div>
<svg class="a" style="left:0;top:0" width="1070" height="518" viewBox="0 0 1070 518">
<rect x="21.4" y="434" width="75.8" height="14.2" fill="none" stroke="#64ea4c" stroke-width="2.8"/>
<path d="M388.4 371 L121 433.8" stroke="#64ea4c" stroke-width="3.1" stroke-linecap="round"/>
<path d="M110 437.4 L119.7 427.2 L123.4 442.6 Z" fill="#64ea4c" stroke="#64ea4c" stroke-width="1" stroke-linejoin="round"/>
</svg>
<div class="a" style="left:3px;top:506.4px;width:1065px;height:8.4px;background:#e8983a;overflow:hidden">
<div class="a" style="left:364.6px;top:3.4px;font-size:8.2px;line-height:8.2px;color:#fff">Instructievideos</div>
<div class="a" style="left:431px;top:3.4px;font-size:8.2px;line-height:8.2px;color:#fff">Een webinar volgen</div>
<div class="a" style="left:510px;top:3.4px;font-size:8.2px;line-height:8.2px;color:#fff">Laatste release</div>
<div class="a" style="left:572px;top:3.4px;font-size:8.2px;line-height:8.2px;color:#fff">Ticket aanmelden</div>
<div class="a" style="left:643px;top:3.4px;font-size:8.2px;line-height:8.2px;color:#fff">Versie: 2.1.0.22205</div>
<div class="a" style="left:938.6px;top:3.4px;font-size:8px;line-height:8px;color:#fff">Friday 03 October 2025</div>
<svg class="a" style="left:1024px;top:1px" width="45" height="8" viewBox="0 0 45 8">
<path d="M4.4 1.2 L13 1.2 L13 8 L4.4 8 Z" fill="none" stroke="#fff" stroke-width="1"/>
<path d="M4 2.6 L13.4 2.6" stroke="#fff" stroke-width="1.4"/>
<path d="M5 0.2 L5 1.5 M7.3 0.2 L7.3 1.5 M9.6 0.2 L9.6 1.5 M12 0.2 L12 1.5" stroke="#fff" stroke-width="0.9"/>
<path d="M6 4.6 L11.5 4.6 M6 6.6 L11.5 6.6" stroke="#fff" stroke-width="0.8" stroke-dasharray="1 0.8"/>
<path d="M24.2 1.6 L24.2 8 M19.9 4.8 L28.5 4.8" stroke="#fff" stroke-width="1.8"/>
<path d="M38.5 8 L39.6 3" fill="none" stroke="#fff" stroke-width="1.1"/>
<path d="M35.2 3.6 Q37.5 0.6 40 2.6 Q42.5 1 44 3.2 Q41.5 2.8 40 3.4 Q42.8 4.2 43.4 7 Q41 4.4 39.6 3.6 Q37 3.4 35.2 3.6 Z" fill="#fff"/>
</svg>
</div>
</body></html>
